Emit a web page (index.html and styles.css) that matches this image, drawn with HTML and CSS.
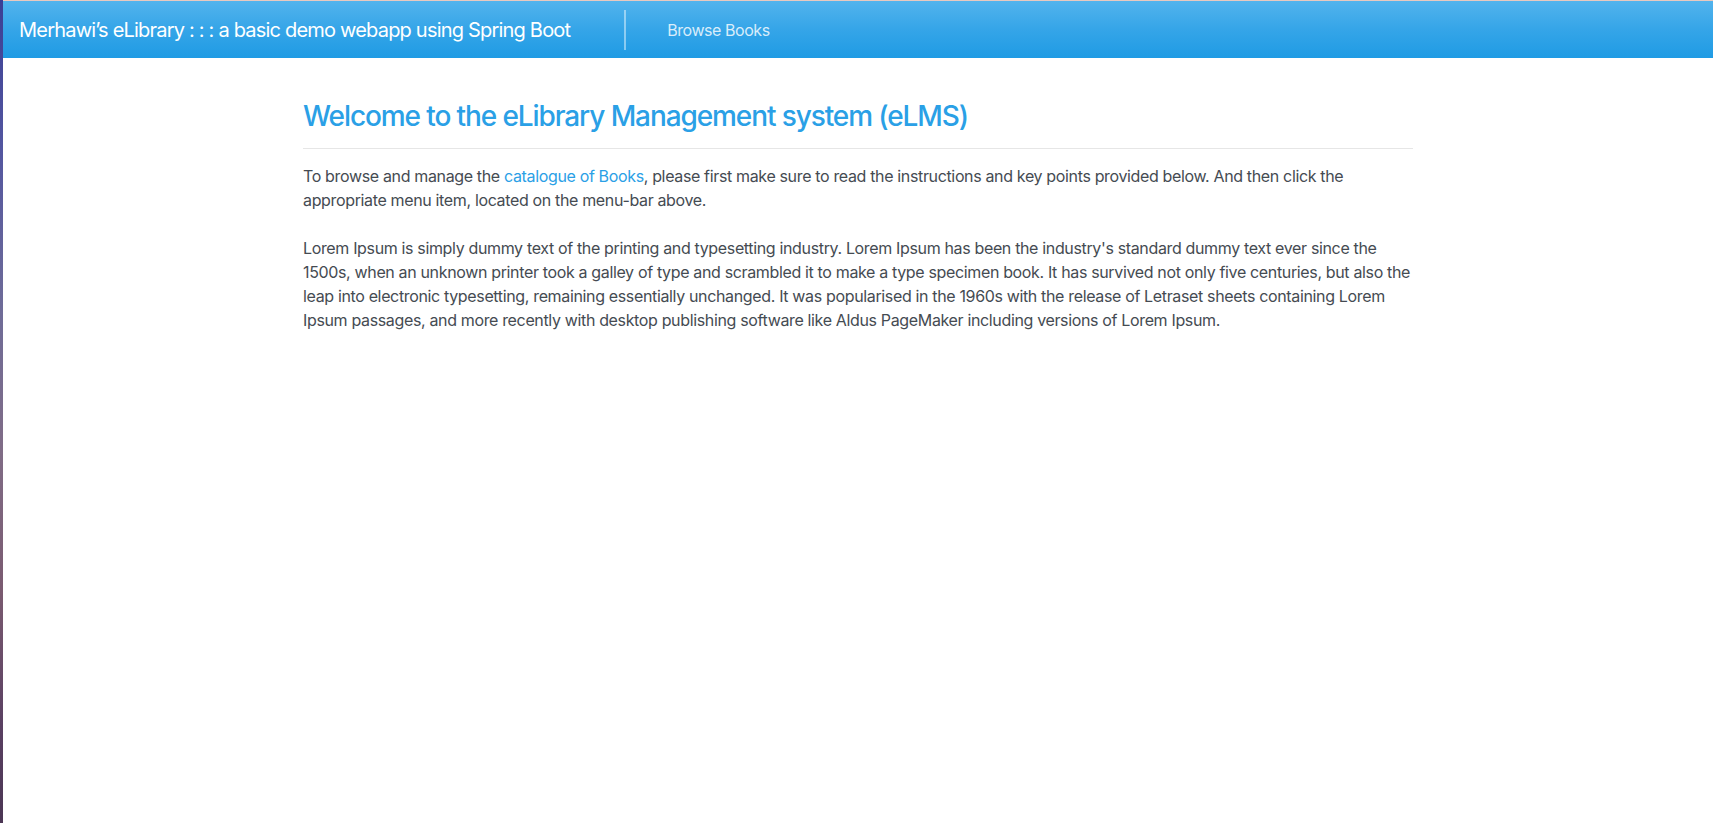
FILE: index.html
```html
<!DOCTYPE html>
<html lang="en">
<head>
<meta charset="utf-8">
<title>eLibrary</title>
<link rel="stylesheet" href="styles.css">
</head>
<body>
<div class="desktop-edge"></div>
<div class="window">
  <nav class="navbar">
    <a class="brand" href="#">Merhawi’s eLibrary : : : a basic demo webapp using Spring Boot</a>
    <span class="divider"></span>
    <a class="nav-link" href="#">Browse Books</a>
  </nav>
  <main class="container">
    <h3 class="title">Welcome to the eLibrary Management system (eLMS)</h3>
    <p class="text">To browse and manage the <a class="link" href="#">catalogue of Books</a>, please first make sure to read the instructions and key points provided below. And then click the appropriate menu item, located on the menu-bar above.</p>
    <p class="text">Lorem Ipsum is simply dummy text of the printing and typesetting industry. Lorem Ipsum has been the industry's standard dummy text ever since the 1500s, when an unknown printer took a galley of type and scrambled it to make a type specimen book. It has survived not only five centuries, but also the leap into electronic typesetting, remaining essentially unchanged. It was popularised in the 1960s with the release of Letraset sheets containing Lorem Ipsum passages, and more recently with desktop publishing software like Aldus PageMaker including versions of Lorem Ipsum.</p>
  </main>
</div>
</body>
</html>
```

FILE: styles.css
```css
html, body {
  margin: 0;
  padding: 0;
  height: 100%;
}
body {
  display: flex;
  font-family: Inter, "Noto Sans", sans-serif;
  background: #ffffff;
  overflow: hidden;
}
.desktop-edge {
  width: 3px;
  flex: 0 0 3px;
  background: linear-gradient(to bottom, #3b3f95 0%, #5356a0 18%, #6f6c98 38%, #806c86 55%, #7a5a70 72%, #5a4062 88%, #4b3654 100%);
}
.window {
  flex: 1;
  min-width: 0;
  border-top: 1px solid #e8c9c0;
  background: #ffffff;
}
.navbar {
  height: 57px;
  box-sizing: border-box;
  display: flex;
  align-items: center;
  padding: 0 16px;
  background: linear-gradient(to bottom, #52b3ed 0%, #35a5e8 50%, #1f9be4 100%);
}
.brand {
  color: #ffffff;
  font-size: 20px;
  text-decoration: none;
  letter-spacing: -0.8px;
}
.divider {
  width: 2px;
  height: 40px;
  margin: 0 41px 0 54px;
  background: rgba(255, 255, 255, 0.45);
}
.nav-link {
  color: rgba(255, 255, 255, 0.82);
  font-size: 16px;
  text-decoration: none;
  letter-spacing: -0.45px;
}
.container {
  max-width: 1110px;
  margin: 0 auto;
  padding: 41px 15px 0;
}
.title {
  margin: 0 0 15px;
  font-size: 28px;
  line-height: 34px;
  font-weight: 500;
  color: #2aa0e6;
  letter-spacing: -1.1px;
}
.title::after {
  content: "";
  display: block;
  margin-top: 15px;
  border-top: 1px solid #e6e6e6;
}
.text {
  margin: 0 0 24px;
  font-size: 16px;
  line-height: 24px;
  color: #454b52;
  letter-spacing: -0.35px;
}
.link {
  color: #2aa0e6;
  text-decoration: none;
}
```
